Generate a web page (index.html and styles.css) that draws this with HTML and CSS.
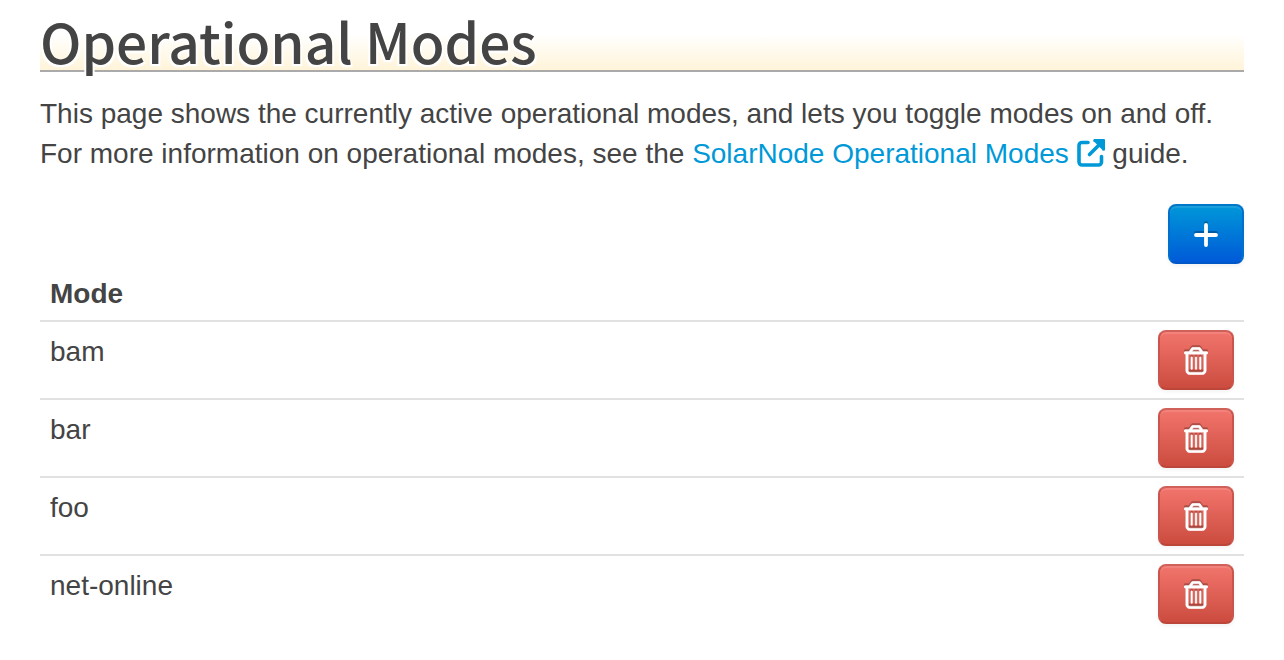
FILE: index.html
```
<!DOCTYPE html>
<html lang="en">
<head>
<meta charset="utf-8">
<meta name="viewport" content="width=device-width, initial-scale=1">
<title>Operational Modes</title>
<link rel="stylesheet" href="styles.css">
</head>
<body>
<svg class="sprite" aria-hidden="true">
  <symbol id="trash" viewBox="0 0 448 512"><path stroke="currentColor" stroke-width="8" d="M170.5 51.6L151.5 80h145l-19-28.4c-1.5-2.2-4-3.6-6.7-3.6H177.1c-2.7 0-5.2 1.3-6.7 3.6zm147-26.6L354.2 80H368h48 8c13.3 0 24 10.7 24 24s-10.7 24-24 24h-8V432c0 44.2-35.8 80-80 80H112c-44.2 0-80-35.8-80-80V128H24c-13.3 0-24-10.7-24-24S10.7 80 24 80h8H80 93.8l36.7-55.1C140.9 9.4 158.4 0 177.1 0h93.7c18.7 0 36.2 9.4 46.6 24.9zM80 128V432c0 17.7 14.3 32 32 32H336c17.7 0 32-14.3 32-32V128H80zm80 64V400c0 8.8-7.2 16-16 16s-16-7.2-16-16V192c0-8.8 7.2-16 16-16s16 7.2 16 16zm80 0V400c0 8.8-7.2 16-16 16s-16-7.2-16-16V192c0-8.8 7.2-16 16-16s16 7.2 16 16zm80 0V400c0 8.8-7.2 16-16 16s-16-7.2-16-16V192c0-8.8 7.2-16 16-16s16 7.2 16 16z"/></symbol>
</svg>
<main class="page">
  <h1 class="title">Operational Modes</h1>
  <p class="intro">This page shows the currently active operational modes, and lets you toggle modes on and off. For more information on operational modes, see the <a class="link" href="#guide">SolarNode Operational Modes <svg class="external" viewBox="0 0 28 28" aria-hidden="true"><path d="M11 3.500H5A3 3 0 0 0 2 6.500V23A3 3 0 0 0 5 26H21.500A3 3 0 0 0 24.500 23V17.500M12.500 15.500L25 3" fill="none" stroke="currentColor" stroke-width="3.600" stroke-linecap="round"/><path d="M18 0H27A1 1 0 0 1 28 1V10A1.500 1.500 0 0 1 25 10.500L17.500 3A1.500 1.500 0 0 1 18 0Z" fill="currentColor"/></svg></a> guide.</p>
  <div class="toolbar">
    <button class="btn btn-primary" type="button" aria-label="Add mode"><svg class="icon plus" viewBox="0 0 24 24" aria-hidden="true"><path d="M12 2V22M2 12H22" fill="none" stroke="currentColor" stroke-width="3.800" stroke-linecap="round"/></svg></button>
  </div>
  <table class="modes">
    <thead><tr><th scope="col">Mode</th><th class="action"></th></tr></thead>
    <tbody>
      <tr><td>bam</td><td class="action"><button class="btn btn-danger" type="button" aria-label="Delete bam"><svg class="icon" aria-hidden="true"><use href="#trash"/></svg></button></td></tr>
      <tr><td>bar</td><td class="action"><button class="btn btn-danger" type="button" aria-label="Delete bar"><svg class="icon" aria-hidden="true"><use href="#trash"/></svg></button></td></tr>
      <tr><td>foo</td><td class="action"><button class="btn btn-danger" type="button" aria-label="Delete foo"><svg class="icon" aria-hidden="true"><use href="#trash"/></svg></button></td></tr>
      <tr><td>net-online</td><td class="action"><button class="btn btn-danger" type="button" aria-label="Delete net-online"><svg class="icon" aria-hidden="true"><use href="#trash"/></svg></button></td></tr>
    </tbody>
  </table>
</main>
</body>
</html>
```
FILE: styles.css
```
* { box-sizing: border-box; }

body {
  margin: 0;
  background: #fff;
  color: #444;
  font: 28px/40px "Liberation Sans", Arial, sans-serif;
}

.sprite { display: none; }

.page { padding: 10px 40px 28px; }

.title {
  margin: 0 0 22px;
  border-bottom: 2px solid #aaa;
  background: linear-gradient(#fff 40%, #fff4d9);
  font: 500 55px/60px "Noto Sans CJK SC", "Noto Sans", sans-serif;
  text-shadow: 0 2px 2px #fff, 2px 2px 1px #fff, -2px 2px 1px #fff;
}

.intro { margin: 0 0 30px; }

.link { color: #0099d8; text-decoration: none; }

.external { width: 28px; height: 28px; vertical-align: -4px; }

.toolbar { display: flex; justify-content: flex-end; }

.btn {
  display: flex;
  align-items: center;
  justify-content: center;
  width: 76px;
  height: 60px;
  padding: 2px 0 0;
  border: 2px solid;
  border-radius: 8px;
  color: #fff;
  box-shadow: inset 0 2px 0 rgba(255, 255, 255, .1), 0 2px 4px rgba(0, 0, 0, .05);
}

.btn-primary {
  border-color: #0078c8 #0070cc #0058c8;
  background: linear-gradient(#0099d8, #0058d8) border-box;
}

.btn-danger {
  border-color: #d0605a #c9554c #bc4639;
  background: linear-gradient(#f3766e, #ca4a3d) border-box;
}

.icon {
  width: 24px;
  height: 28px;
  fill: currentColor;
  filter: drop-shadow(0 -2px 0 rgba(0, 0, 0, .25));
}

.plus { height: 24px; }

.modes { width: 100%; border-collapse: separate; border-spacing: 0; }

.modes th, .modes td { padding: 10px 10px 6px; text-align: left; vertical-align: top; }

.modes td { border-top: 2px solid #e1e1e1; }

.modes .action { width: 96px; padding: 8px 10px; }
```
